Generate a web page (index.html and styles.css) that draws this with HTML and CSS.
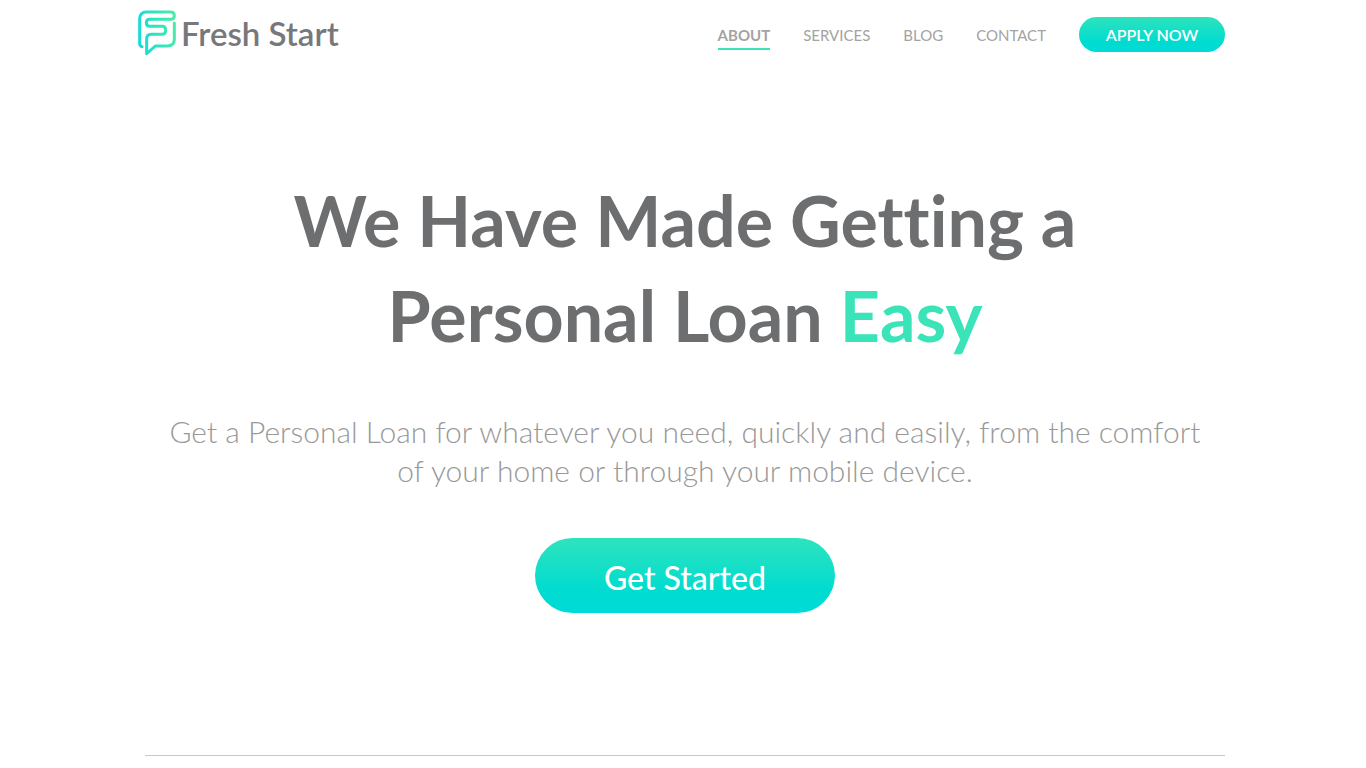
FILE: index.html
```html
<!DOCTYPE html>
<html lang="en">
<head>
  <meta charset="utf-8">
  <meta name="viewport" content="width=device-width, initial-scale=1">
  <title>Fresh Start</title>
  <link rel="stylesheet" href="styles.css">
</head>
<body>
  <header class="site-header">
    <a class="logo" href="#">
      <svg class="logo-mark" viewBox="24 30 114 136" aria-hidden="true">
        <defs>
          <linearGradient id="mark" gradientUnits="userSpaceOnUse" x1="24" y1="100" x2="138" y2="80">
            <stop offset="0" stop-color="#14dcd6"/>
            <stop offset="1" stop-color="#4deaa6"/>
          </linearGradient>
        </defs>
        <path d="M36 139Q29 138 29 129V56Q29 35 50 35H122Q133 35 133 46T122 57H59Q49 57 49 67.500T59 78H97Q107 78 107 90T96 102H64Q50 102 50 116V160L76 137H112Q133 137 133 117V68" fill="none" stroke="url(#mark)" stroke-width="9" stroke-linecap="round" stroke-linejoin="round"/>
      </svg>
      <span class="logo-name">Fresh Start</span>
    </a>
    <nav class="nav">
      <a class="nav-link nav-link-active" href="#">ABOUT</a>
      <a class="nav-link" href="#">SERVICES</a>
      <a class="nav-link" href="#">BLOG</a>
      <a class="nav-link" href="#">CONTACT</a>
      <button class="button apply" type="button">APPLY NOW</button>
    </nav>
  </header>
  <main class="hero">
    <h1 class="title">We Have Made Getting a<br>Personal Loan <span class="accent">Easy</span></h1>
    <p class="lead">Get a Personal Loan for whatever you need, quickly and easily, from the comfort<br>of your home or through your mobile device.</p>
    <button class="button start" type="button">Get Started</button>
  </main>
</body>
</html>
```

FILE: styles.css
```css
* {
  box-sizing: border-box;
}

body {
  margin: 0;
  padding-left: 4px;
  background: #fff;
  font-family: Lato, "Open Sans", sans-serif;
  font-variant-ligatures: none;
  color: #6d6e70;
}

.site-header {
  display: flex;
  justify-content: space-between;
  align-items: center;
  max-width: 1094px;
  margin: 0 auto;
  padding: 10px 7px 0 0;
}

.logo {
  display: flex;
  align-items: center;
  gap: 5px;
  color: #77787b;
  text-decoration: none;
}

.logo-mark {
  width: 38px;
  height: 46px;
}

.logo-name {
  font-size: 33px;
  line-height: 46px;
  font-weight: 600;
}

.nav {
  display: flex;
  align-items: center;
  gap: 33px;
  padding-top: 2px;
}

.nav-link {
  padding: 7px 0 3px;
  border-bottom: 2px solid transparent;
  font-size: 15px;
  line-height: 20px;
  color: #a3a3a3;
  text-decoration: none;
}

.nav-link-active {
  border-bottom-color: #3be4b8;
  font-weight: 700;
}

.button {
  border: 0;
  border-radius: 40px;
  background: linear-gradient(#2ee3bd, #00dcd0 70%, #00dad8);
  font-family: inherit;
  color: #fff;
}

.apply {
  width: 146px;
  height: 35px;
  font-size: 16px;
  font-weight: 600;
}

.hero {
  max-width: 1080px;
  margin: 0 auto;
  padding: 117px 0 142px;
  border-bottom: 1px solid #c8c8c8;
  text-align: center;
}

.title {
  margin: 0 0 49px;
  font-size: 70px;
  line-height: 95px;
  font-weight: 700;
}

.accent {
  color: #3be4b8;
}

.lead {
  margin: 0 0 48px;
  font-size: 30px;
  line-height: 39px;
  font-weight: 300;
  color: #999;
}

.start {
  display: block;
  width: 300px;
  height: 75px;
  margin: 0 auto;
  padding-top: 4px;
  font-size: 32px;
  font-weight: 500;
}
```
